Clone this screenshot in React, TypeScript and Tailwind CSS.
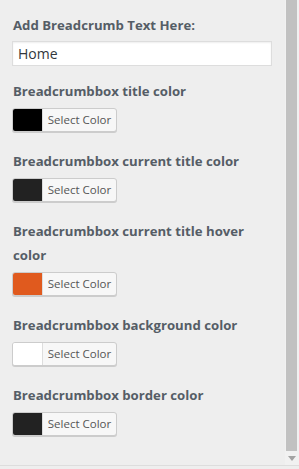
import React from 'react';

const colorOptions = [
  { label: 'Breadcrumbbox title color', color: '#000000' },
  { label: 'Breadcrumbbox current title color', color: '#222222' },
  { label: 'Breadcrumbbox current title hover color', color: '#e05a1e' },
  { label: 'Breadcrumbbox background color', color: '#ffffff' },
  { label: 'Breadcrumbbox border color', color: '#222222' },
];

const ColorButton = ({ color }: { color: string }) => (
  <button
    type="button"
    className="flex h-[24px] w-[105px] items-stretch overflow-hidden rounded-[3px] border border-[#cccccc] bg-[#f7f7f7] p-0 shadow-[0_1px_0_#cccccc]"
  >
    <span className="w-[30px] border-r border-[#dddddd]" style={{ backgroundColor: color }} />
    <span className="flex flex-1 items-center justify-center text-[11.5px] text-[#555555]">Select Color</span>
  </button>
);

export default function App() {
  return (
    <div className="flex h-[469px] w-[299px] flex-col bg-[#eeeeee] font-['Open_Sans',sans-serif]">
      <div className="flex min-h-0 flex-1">
        {/* Customizer panel */}
        <div className="flex-1 pl-[12px] pr-[13px] pt-[11px]">
          <div className="px-[1px] pt-[2px] text-[13.2px] font-bold leading-[24px] text-[#555d66]">Add Breadcrumb Text Here:</div>
          <input
            type="text"
            defaultValue="Home"
            className="mt-[4px] h-[25px] w-full border border-[#dddddd] bg-white px-[5px] text-[14px] text-[#32373c] outline-none shadow-[inset_0_1px_2px_rgba(0,0,0,0.07)]"
          />
          <div className="mt-[11px] flex flex-col gap-[15px]">
            {colorOptions.map((opt) => (
              <div key={opt.label}>
                <div className="px-[1px] pt-[2px] text-[13.2px] font-bold leading-[24px] text-[#555d66]">{opt.label}</div>
                <div className="mt-[5px]">
                  <ColorButton color={opt.color} />
                </div>
              </div>
            ))}
          </div>
        </div>

        {/* Scrollbar */}
        <div className="flex w-[14px] flex-col bg-[#f1f1f1] pl-[1px] pr-[2px]">
          <div className="h-[451px] bg-[#c1c1c1]" />
          <div className="flex flex-1 items-center justify-center">
            <svg width="8" height="5" viewBox="0 0 8 5">
              <path d="M0 0h8L4 5z" fill="#a3a3a3" />
            </svg>
          </div>
        </div>
      </div>
      <div className="h-[1px] bg-[#dddddd]" />
      <div className="h-[3px]" />
    </div>
  );
}
